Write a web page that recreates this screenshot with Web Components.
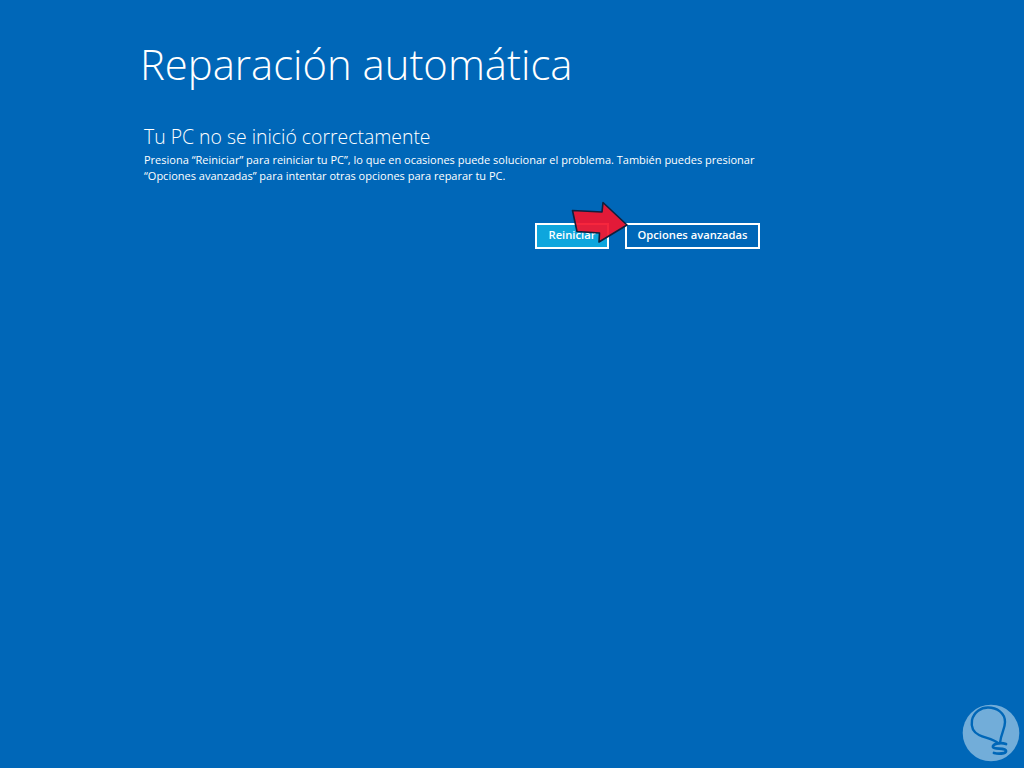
<!DOCTYPE html>
<html lang="es"><head><meta charset="utf-8">
<style>
html,body{margin:0;height:100%;background:#0067b8;}
body{overflow:hidden;}
</style></head>
<body>
<recovery-screen>
  <span slot="title">Reparación automática</span>
  <span slot="heading">Tu PC no se inició correctamente</span>
  <span slot="line1">Presiona “Reiniciar” para reiniciar tu PC”, lo que en ocasiones puede solucionar el problema. También puedes presionar</span>
  <span slot="line2">“Opciones avanzadas” para intentar otras opciones para reparar tu PC.</span>
  <recovery-button slot="actions" focused style="width:74px">Reiniciar</recovery-button>
  <recovery-button slot="actions" style="width:135px">Opciones avanzadas</recovery-button>
</recovery-screen>
<red-arrow></red-arrow>
<site-badge></site-badge>
<script>
const FONT='"Open Sans","Noto Sans",sans-serif';
class RecoveryScreen extends HTMLElement{constructor(){super();this.attachShadow({mode:'open'}).innerHTML=`
<style>
:host{display:block;height:768px;box-sizing:border-box;padding:35px 264px 0 140px;color:#fff;font-family:${FONT};background:#0067b8}
h1{margin:0;font-weight:300;font-size:41.8px;line-height:58px;white-space:nowrap}
h2{margin:31px 0 0 4px;font-weight:300;font-size:19.4px;line-height:26px;white-space:nowrap}
.p{margin:2px 0 0 4px;font-size:11px;line-height:16px;white-space:nowrap}
.p div{display:block}
.actions{display:flex;justify-content:flex-end;gap:16px;margin-top:39px}
</style>
<h1><slot name="title"></slot></h1>
<h2><slot name="heading"></slot></h2>
<div class="p"><div><slot name="line1"></slot></div><div><slot name="line2"></slot></div></div>
<div class="actions"><slot name="actions"></slot></div>`}}
customElements.define('recovery-screen',RecoveryScreen);
class RecoveryButton extends HTMLElement{constructor(){super();this.attachShadow({mode:'open'}).innerHTML=`
<style>
:host{display:flex;box-sizing:border-box;height:26px;padding-bottom:3px;align-items:center;justify-content:center;border:2px solid #fff;color:#fff;font-size:11.2px;font-weight:600;white-space:nowrap;background:#0067b8}
:host([focused]){background:#0ea6dd}
</style><slot></slot>`}}
customElements.define('recovery-button',RecoveryButton);
class RedArrow extends HTMLElement{constructor(){super();this.attachShadow({mode:'open'}).innerHTML=`
<style>:host{display:block;position:absolute;left:565px;top:198px;width:70px;height:52px}svg{display:block}</style>
<svg width="70" height="52" viewBox="0 0 70 52"><path d="M7.500 12.500 L37 14 L38 4.500 L62 27 L34 44 L34.500 35 L12 33.500 Z" fill="#f5132c" fill-opacity=".92" stroke="#101f3c" stroke-width="1.6" stroke-linejoin="round"/></svg>`}}
customElements.define('red-arrow',RedArrow);
class SiteBadge extends HTMLElement{constructor(){super();this.attachShadow({mode:'open'}).innerHTML=`
<style>:host{display:block;position:absolute;left:960px;top:702px;width:62px;height:62px}svg{display:block}</style>
<svg width="62" height="62" viewBox="0 0 62 62"><circle cx="31" cy="31" r="28.3" fill="#72add9"/>
<g fill="none" stroke="#0067b8" stroke-width="2.4" stroke-linecap="round">
<path d="M38 41 C33 37 25 36 19 33 C13 30 11 24 12 18 C14 10 21 5.500 28 5.500 C37 5.500 45 11 45 20 C45 27 41 31 40 41"/>
<path d="M46 42 C40 40 32 42 33 45 C34 48 46 45 46 49 C46 52 38 52 34 51" stroke-width="2.800"/></g></svg>`}}
customElements.define('site-badge',SiteBadge);
</script>
</body></html>
